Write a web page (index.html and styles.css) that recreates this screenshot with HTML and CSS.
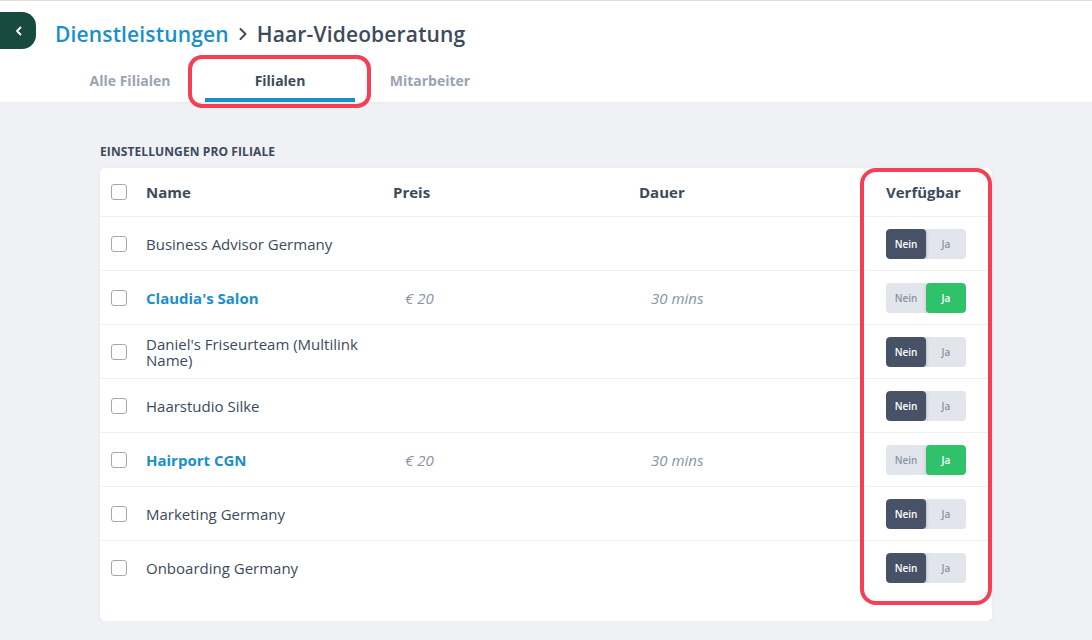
FILE: index.html
```html
<!DOCTYPE html>
<html lang="de">
<head>
    <meta charset="UTF-8" />
    <title>Haar-Videoberatung - Filialen</title>
    <link rel="stylesheet" href="styles.css">
</head>
<body>
    <header class="topbar">
        <div class="title-row">
            <button class="back-btn" aria-label="Zurück">
                <svg width="10" height="10" viewBox="0 0 10 10"><path d="M6.5 1.5 L3 5 L6.5 8.5" fill="none" stroke="#fff" stroke-width="1.8" stroke-linecap="round" stroke-linejoin="round"/></svg>
            </button>
            <h1 class="crumbs">
                <span class="crumb-link">Dienstleistungen</span>
                <svg class="crumb-sep" width="14" height="14" viewBox="0 0 14 14"><path d="M4.5 2 L9.5 7 L4.5 12" fill="none" stroke="#3d4a5c" stroke-width="2" stroke-linecap="round" stroke-linejoin="round"/></svg>
                <span class="crumb-current">Haar-Videoberatung</span>
            </h1>
        </div>
        <nav class="tabs">
            <a class="tab">Alle Filialen</a>
            <a class="tab active">Filialen</a>
            <a class="tab">Mitarbeiter</a>
        </nav>
    </header>

    <main class="content">
        <h2 class="section-label">Einstellungen pro Filiale</h2>
        <div class="card">
            <div class="row head">
                <span class="check"></span>
                <span>Name</span>
                <span>Preis</span>
                <span>Dauer</span>
                <span>Verfügbar</span>
            </div>
            <div class="row">
                <span class="check"></span>
                <span class="name">Business Advisor Germany</span>
                <span></span><span></span>
                <div class="toggle"><span class="on-dark">Nein</span><span>Ja</span></div>
            </div>
            <div class="row">
                <span class="check"></span>
                <span class="name link">Claudia's Salon</span>
                <span class="muted">€ 20</span>
                <span class="muted">30 mins</span>
                <div class="toggle"><span>Nein</span><span class="on-green">Ja</span></div>
            </div>
            <div class="row">
                <span class="check"></span>
                <span class="name">Daniel's Friseurteam (Multilink Name)</span>
                <span></span><span></span>
                <div class="toggle"><span class="on-dark">Nein</span><span>Ja</span></div>
            </div>
            <div class="row">
                <span class="check"></span>
                <span class="name">Haarstudio Silke</span>
                <span></span><span></span>
                <div class="toggle"><span class="on-dark">Nein</span><span>Ja</span></div>
            </div>
            <div class="row">
                <span class="check"></span>
                <span class="name link">Hairport CGN</span>
                <span class="muted">€ 20</span>
                <span class="muted">30 mins</span>
                <div class="toggle"><span>Nein</span><span class="on-green">Ja</span></div>
            </div>
            <div class="row">
                <span class="check"></span>
                <span class="name">Marketing Germany</span>
                <span></span><span></span>
                <div class="toggle"><span class="on-dark">Nein</span><span>Ja</span></div>
            </div>
            <div class="row last">
                <span class="check"></span>
                <span class="name">Onboarding Germany</span>
                <span></span><span></span>
                <div class="toggle"><span class="on-dark">Nein</span><span>Ja</span></div>
            </div>
            <div class="highlight-col"></div>
        </div>
    </main>
</body>
</html>
```

FILE: styles.css
```css
body {
    font-family: 'Open Sans', 'Liberation Sans', sans-serif;
    background-color: #f0f1f5;
    color: #3d4a5c;
    margin: 0;
    border-top: 1px solid #dcdde0;
}

.topbar {
    background: white;
    height: 101px;
    box-shadow: 0 1px 3px rgba(0,0,0,0.04);
}

.title-row {
    display: flex;
    align-items: flex-start;
    padding-top: 11px;
    height: 37px;
}

.back-btn {
    width: 36px;
    height: 37px;
    border: none;
    background: #174a41;
    border-radius: 0 14px 14px 0;
    display: flex;
    align-items: center;
    justify-content: center;
    padding: 0 0 0 2px;
    margin-right: 19px;
}

.crumbs {
    margin: 8px 0 0;
    font-size: 21px;
    font-weight: 600;
    display: flex;
    align-items: center;
    letter-spacing: 0.15px;
}

.crumb-link {
    color: #1a8fc9;
}

.crumb-sep {
    margin: 0 7px 0 7px;
}

.crumb-current {
    color: #3d4a5c;
}

.tabs {
    display: flex;
    padding-left: 55px;
    margin-top: 12px;
}

.tab {
    width: 150px;
    height: 41px;
    box-sizing: border-box;
    display: flex;
    align-items: center;
    justify-content: center;
    padding-top: 2px;
    border-bottom: 4px solid transparent;
    font-size: 14px;
    font-weight: 700;
    color: #9aa3b5;
    position: relative;
}

.tab.active {
    color: #3d4a5c;
    border-bottom-color: #1a8fc9;
}

.tab.active::after {
    content: "";
    position: absolute;
    left: -17px;
    right: -16px;
    top: -6px;
    bottom: -10px;
    border: 4px solid #f43f55;
    border-radius: 14px;
}

.content {
    padding: 41px 100px 0;
}

.section-label {
    margin: 0 0 8px;
    font-size: 12px;
    font-weight: 700;
    text-transform: uppercase;
    color: #3d4a5c;
    letter-spacing: 0.1px;
}

.card {
    background: white;
    border-radius: 5px;
    box-shadow: 0 1px 4px rgba(0,0,0,0.05);
    padding-bottom: 26px;
    position: relative;
}

.row {
    display: grid;
    grid-template-columns: 46px 247px 246px 247px 1fr;
    align-items: center;
    height: 54px;
    box-sizing: border-box;
    border-bottom: 1px solid #eff0f2;
    font-size: 15px;
    font-weight: 500;
}

.row.head {
    height: 49px;
    font-weight: 700;
    font-size: 15px;
}

.row.last {
    border-bottom: none;
}

.check {
    width: 14px;
    height: 14px;
    border: 1px solid #a2a9b5;
    border-radius: 3px;
    margin-left: 11px;
}

.name {
    line-height: 16px;
    padding-right: 16px;
}

.link {
    color: #1a8fc9;
    font-weight: 700;
}

.muted {
    color: #8893a6;
    font-style: italic;
    padding-left: 12px;
}

.toggle {
    display: flex;
    width: 80px;
    height: 30px;
    border-radius: 4px;
    background: #e2e6ec;
    overflow: hidden;
}

.toggle span {
    flex: 1;
    display: flex;
    align-items: center;
    justify-content: center;
    font-size: 10px;
    font-weight: 600;
    color: #8a93a5;
}

.toggle .on-dark {
    background: #475267;
    color: white;
    border-radius: 4px;
    box-shadow: 1px 1px 3px rgba(0,0,0,0.15);
}

.toggle .on-green {
    background: #2fc26b;
    color: white;
    border-radius: 4px;
    box-shadow: -1px 1px 3px rgba(0,0,0,0.1);
}

.highlight-col {
    position: absolute;
    left: 760px;
    top: 0;
    width: 132px;
    height: 437px;
    box-sizing: border-box;
    border: 4px solid #f43f55;
    border-radius: 16px;
}
```
